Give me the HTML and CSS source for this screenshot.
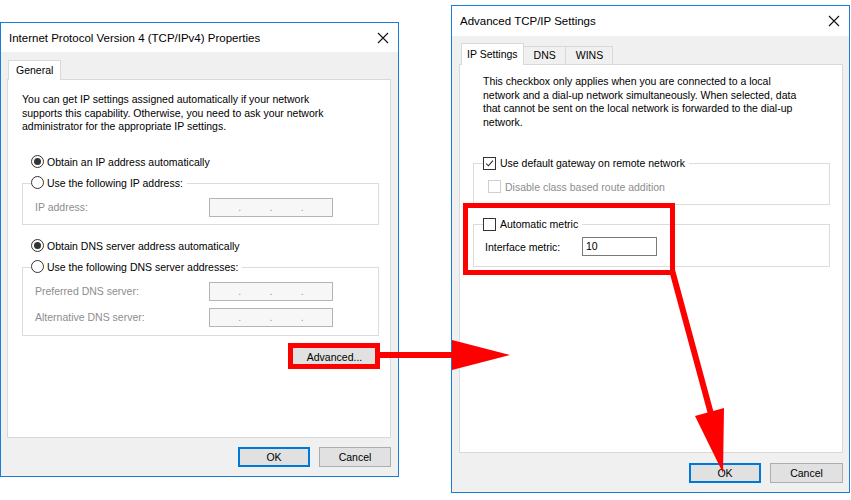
FILE: index.html
```html
<!DOCTYPE html>
<html lang="en">
<head>
    <meta charset="UTF-8">
    <meta name="viewport" content="width=device-width, initial-scale=1.0">
    <title>TCP/IPv4 Advanced settings</title>
    <link rel="stylesheet" href="styles.css">
</head>
<body>
    <!-- IPv4 properties dialog -->
    <div class="dialog dialog-ipv4">
        <div class="titlebar">
            <span>Internet Protocol Version 4 (TCP/IPv4) Properties</span>
            <svg class="close" viewBox="0 0 12 12"><path d="M1 1L11 11M11 1L1 11" stroke="#111" stroke-width="1.1" fill="none"/></svg>
        </div>
        <div class="dialog-body">
            <div class="tabs tabs-ipv4">
                <div class="tab active">General</div>
            </div>
            <div class="panel panel-ipv4">
                <p class="intro">You can get IP settings assigned automatically if your network<br>supports this capability. Otherwise, you need to ask your network<br>administrator for the appropriate IP settings.</p>

                <div class="option option-first"><span class="radio checked"></span>Obtain an IP address automatically</div>
                <div class="group group-ip">
                    <div class="legend"><span class="radio"></span>Use the following IP address:</div>
                    <div class="field field-first">
                        <span class="field-label disabled">IP address:</span>
                        <span class="ip-box"><i></i><b>.</b><i></i><b>.</b><i></i><b>.</b><i></i></span>
                    </div>
                </div>

                <div class="option option-dns"><span class="radio checked"></span>Obtain DNS server address automatically</div>
                <div class="group group-dns">
                    <div class="legend"><span class="radio"></span>Use the following DNS server addresses:</div>
                    <div class="field field-first">
                        <span class="field-label disabled">Preferred DNS server:</span>
                        <span class="ip-box"><i></i><b>.</b><i></i><b>.</b><i></i><b>.</b><i></i></span>
                    </div>
                    <div class="field">
                        <span class="field-label disabled">Alternative DNS server:</span>
                        <span class="ip-box"><i></i><b>.</b><i></i><b>.</b><i></i><b>.</b><i></i></span>
                    </div>
                </div>

                <div class="advanced-row">
                    <div class="btn btn-advanced">Advanced...</div>
                </div>
            </div>
            <div class="buttons">
                <div class="btn btn-default">OK</div>
                <div class="btn">Cancel</div>
            </div>
        </div>
    </div>

    <!-- Advanced TCP/IP dialog -->
    <div class="dialog dialog-adv">
        <div class="titlebar">
            <span>Advanced TCP/IP Settings</span>
            <svg class="close" viewBox="0 0 12 12"><path d="M1 1L11 11M11 1L1 11" stroke="#111" stroke-width="1.1" fill="none"/></svg>
        </div>
        <div class="dialog-body body-adv">
            <div class="tabs tabs-adv">
                <div class="tab active">IP Settings</div>
                <div class="tab">DNS</div>
                <div class="tab">WINS</div>
            </div>
            <div class="panel panel-adv">
                <p class="note">This checkbox only applies when you are connected to a local<br>network and a dial-up network simultaneously. When selected, data<br>that cannot be sent on the local network is forwarded to the dial-up<br>network.</p>

                <div class="group group-gateway">
                    <div class="legend legend-check">
                        <span class="checkbox">
                            <svg viewBox="0 0 13 13"><path d="M2.5 6.5L5.2 9.2L10.5 3.2" stroke="#222" stroke-width="1.2" fill="none"/></svg>
                        </span>Use default gateway on remote network
                    </div>
                    <div class="check-row disabled"><span class="checkbox off"></span>Disable class based route addition</div>
                </div>

                <div class="group group-metric">
                    <div class="legend legend-check"><span class="checkbox"></span>Automatic metric</div>
                    <div class="field field-metric">
                        <span class="field-label metric-label">Interface metric:</span>
                        <span class="text-box">10</span>
                    </div>
                </div>
            </div>
            <div class="buttons buttons-adv">
                <div class="btn btn-default">OK</div>
                <div class="btn">Cancel</div>
            </div>
        </div>
    </div>

    <!-- red annotation -->
    <svg class="marks" viewBox="0 0 851 500">
        <rect x="290.5" y="345.5" width="87" height="21" fill="none" stroke="#ff0000" stroke-width="5"/>
        <path d="M380 355H453" stroke="#ff0000" stroke-width="6"/>
        <polygon points="452,340 510,355 452,370" fill="#ff0000"/>
        <rect x="465.5" y="205.5" width="207" height="67" fill="none" stroke="#ff0000" stroke-width="5"/>
        <path d="M672 270L711 414" stroke="#ff0000" stroke-width="6"/>
        <polygon points="695,416 724,408 723,473" fill="#ff0000"/>
    </svg>
</body>
</html>
```

FILE: styles.css
```css
* {
    box-sizing: border-box;
}
body {
    margin: 0;
    width: 851px;
    height: 500px;
    position: relative;
    overflow: hidden;
    display: flex;
    align-items: flex-start;
    background-color: #fff;
    font-family: "Liberation Sans", Arial, sans-serif;
    font-size: 10.5px;
    color: #000;
}
p {
    margin: 0;
}

/* window frame */
.dialog {
    display: flex;
    flex-direction: column;
    width: 399px;
    border: 1px solid #1a7ed6;
    background-color: #f0f0f0;
}
.dialog-ipv4 {
    height: 455px;
    margin-top: 22px;
}
.dialog-adv {
    height: 488px;
    margin-top: 5px;
    margin-left: 52px;
}
.titlebar {
    height: 29px;
    display: flex;
    align-items: center;
    justify-content: space-between;
    padding: 0 9px 0 8px;
    background-color: #fff;
    font-size: 11.5px;
}
.dialog-adv .titlebar {
    height: 30px;
    padding-bottom: 1px;
}
.close {
    width: 12px;
    height: 12px;
}
.dialog-body {
    flex: 1;
    display: flex;
    flex-direction: column;
    padding: 8px 7px 0 6px;
}
.body-adv {
    padding: 7px 6px 0 7px;
}

/* tabs */
.tabs {
    display: flex;
    align-items: flex-end;
    padding-left: 2px;
}
.tabs-ipv4 {
    height: 19px;
}
.tabs-adv {
    height: 21px;
    padding-left: 3px;
}
.tab {
    height: 18px;
    padding: 0 6px;
    border: 1px solid #d9d9d9;
    border-bottom: none;
    margin-left: -1px;
    background-color: #f0f0f0;
    line-height: 17px;
}
.tab.active {
    position: relative;
    z-index: 1;
    margin-bottom: -1px;
    background-color: #fff;
    line-height: 19px;
}
.tabs-ipv4 .tab.active {
    height: 20px;
    padding: 0 7px;
}
.tabs-adv .tab.active {
    height: 22px;
    line-height: 20px;
    padding: 0 5px;
}
.tabs-adv .tab {
    padding: 0 9px 0 10px;
}

.panel {
    background-color: #fff;
    border: 1px solid #d9d9d9;
}
.panel-ipv4 {
    height: 359px;
    padding: 13px 0 0 14px;
}
.panel-adv {
    height: 389px;
    padding: 10px 0 0 12px;
}

/* text */
.intro,
.note {
    line-height: 13.5px;
}
.note {
    margin-left: 11px;
}
.disabled {
    color: #8d8d8d;
}

/* radio buttons and checkboxes */
.option,
.legend,
.check-row {
    display: flex;
    align-items: center;
    height: 16px;
    white-space: nowrap;
}
.option {
    margin-left: 9px;
}
.option-first {
    margin-top: 20px;
}
.option-dns {
    margin-top: 13px;
}
.radio {
    width: 13px;
    height: 13px;
    margin-right: 3px;
    border: 1px solid #333;
    border-radius: 50%;
    background-color: #fff;
    display: flex;
    align-items: center;
    justify-content: center;
    flex: none;
}
.radio.checked::after {
    content: "";
    width: 7px;
    height: 7px;
    border-radius: 50%;
    background-color: #333;
}
.checkbox {
    width: 13px;
    height: 13px;
    margin-right: 4px;
    border: 1px solid #333;
    background-color: #fff;
    flex: none;
}
.checkbox svg {
    display: block;
    width: 11px;
    height: 11px;
}
.checkbox.off {
    border-color: #cfcfcf;
}

/* group boxes */
.group {
    width: 357px;
    border: 1px solid #dcdcdc;
}
.legend {
    width: fit-content;
    margin: -9px 0 0 8px;
    padding-right: 4px;
    background-color: #fff;
}
.group-ip {
    height: 42px;
    margin-top: 13px;
}
.group-dns {
    height: 69px;
    margin-top: 13px;
}
.group-gateway {
    height: 42px;
    margin: 34px 0 0 1px;
}
.group-metric {
    height: 43px;
    margin: 19px 0 0 1px;
}
.legend-check {
    margin-left: 9px;
}
.check-row {
    height: 13px;
    margin: 9px 0 0 14px;
}

/* fields */
.field {
    display: flex;
    align-items: center;
    height: 19px;
    margin-top: 7px;
    padding-left: 12px;
}
.field-label {
    width: 174px;
    flex: none;
}
.ip-box {
    width: 124px;
    height: 19px;
    display: flex;
    align-items: center;
    border: 1px solid #b4b4b4;
    background-color: #f7f7f7;
    color: #9a9a9a;
}
.ip-box i {
    flex: 1;
}
.ip-box b {
    font-weight: normal;
}
.field-metric {
    margin-top: 5px;
    padding-left: 11px;
}
.metric-label {
    width: 97px;
}
.text-box {
    width: 75px;
    height: 19px;
    padding-left: 3px;
    border: 1px solid #7a7a7a;
    background-color: #fff;
    line-height: 17px;
}

/* buttons */
.btn {
    width: 72px;
    height: 20px;
    display: flex;
    align-items: center;
    justify-content: center;
    border: 1px solid #adadad;
    background-color: #e1e1e1;
}
.btn-default {
    border: 2px solid #0078d7;
}
.advanced-row {
    display: flex;
    justify-content: flex-end;
    margin-top: 11px;
    padding-right: 13px;
}
.btn-advanced {
    width: 85px;
    height: 21px;
}
.buttons {
    display: flex;
    justify-content: flex-end;
    gap: 9px;
    margin-top: 9px;
}
.buttons-adv {
    margin-top: 10px;
}
.buttons-adv .btn:last-child {
    width: 73px;
}

/* annotation overlay */
.marks {
    position: absolute;
    left: 0;
    top: 0;
    width: 851px;
    height: 500px;
    pointer-events: none;
}
```
